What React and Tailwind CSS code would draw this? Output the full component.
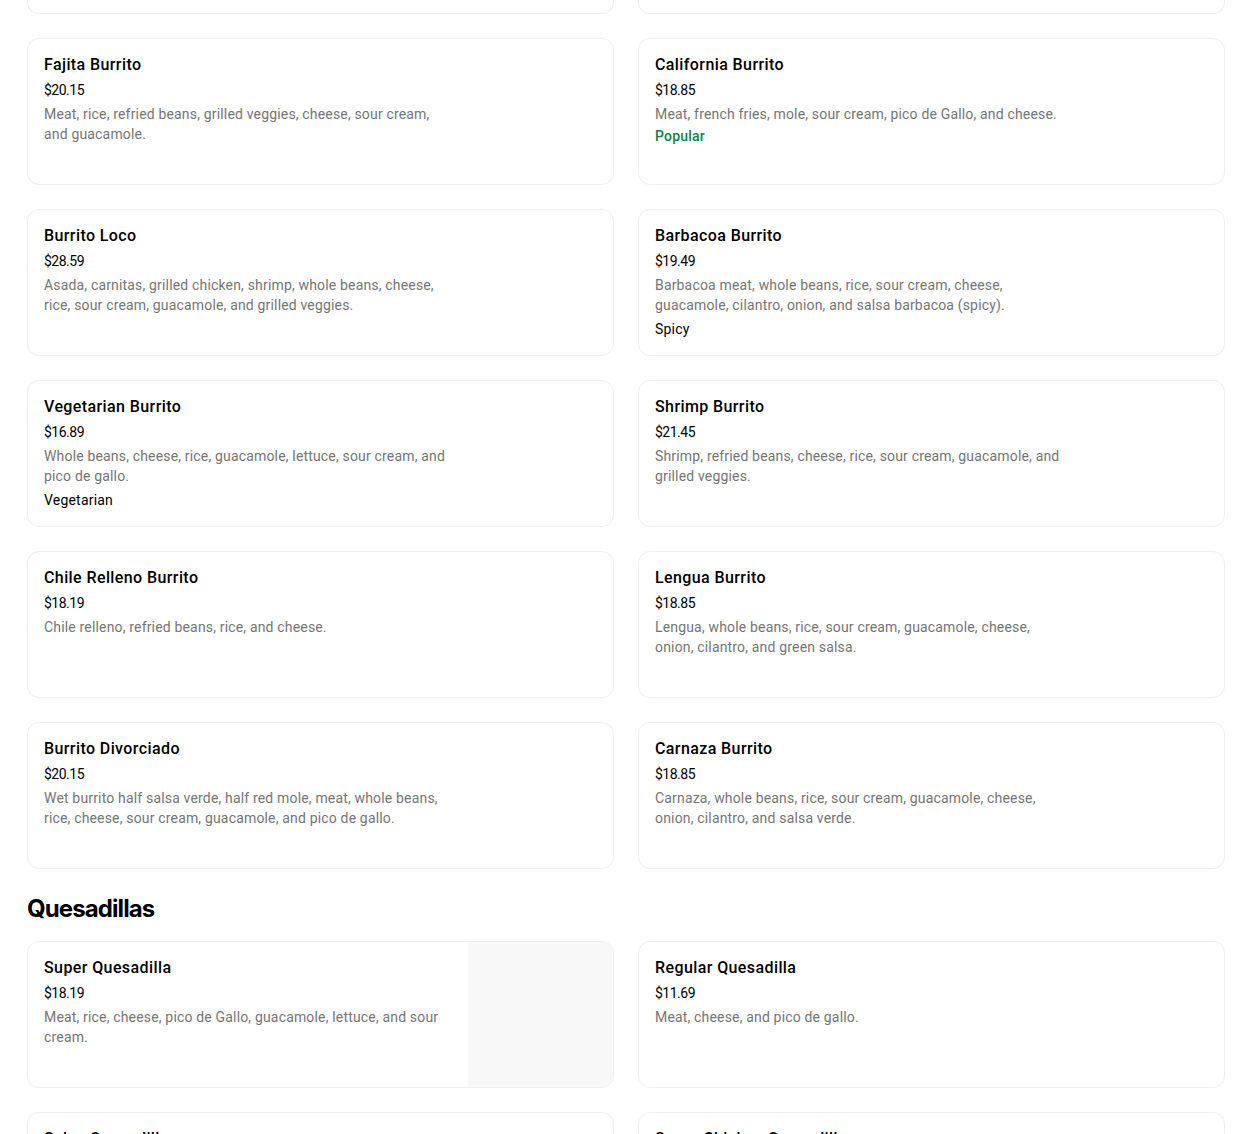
const rows = [
  [
    {
      name: 'Fajita Burrito',
      price: '$20.15',
      desc: 'Meat, rice, refried beans, grilled veggies, cheese, sour cream, and guacamole.',
    },
    {
      name: 'California Burrito',
      price: '$18.85',
      desc: 'Meat, french fries, mole, sour cream, pico de Gallo, and cheese.',
      tag: 'Popular',
    },
  ],
  [
    {
      name: 'Burrito Loco',
      price: '$28.59',
      desc: 'Asada, carnitas, grilled chicken, shrimp, whole beans, cheese, rice, sour cream, guacamole, and grilled veggies.',
    },
    {
      name: 'Barbacoa Burrito',
      price: '$19.49',
      desc: 'Barbacoa meat, whole beans, rice, sour cream, cheese, guacamole, cilantro, onion, and salsa barbacoa (spicy).',
      tag: 'Spicy',
    },
  ],
  [
    {
      name: 'Vegetarian Burrito',
      price: '$16.89',
      desc: 'Whole beans, cheese, rice, guacamole, lettuce, sour cream, and pico de gallo.',
      tag: 'Vegetarian',
    },
    {
      name: 'Shrimp Burrito',
      price: '$21.45',
      desc: 'Shrimp, refried beans, cheese, rice, sour cream, guacamole, and grilled veggies.',
    },
  ],
  [
    {
      name: 'Chile Relleno Burrito',
      price: '$18.19',
      desc: 'Chile relleno, refried beans, rice, and cheese.',
    },
    {
      name: 'Lengua Burrito',
      price: '$18.85',
      desc: 'Lengua, whole beans, rice, sour cream, guacamole, cheese, onion, cilantro, and green salsa.',
    },
  ],
  [
    {
      name: 'Burrito Divorciado',
      price: '$20.15',
      desc: 'Wet burrito half salsa verde, half red mole, meat, whole beans, rice, cheese, sour cream, guacamole, and pico de gallo.',
    },
    {
      name: 'Carnaza Burrito',
      price: '$18.85',
      desc: 'Carnaza, whole beans, rice, sour cream, guacamole, cheese, onion, cilantro, and salsa verde.',
    },
  ],
]

const quesadillas = [
  {
    name: 'Super Quesadilla',
    price: '$18.19',
    desc: 'Meat, rice, cheese, pico de Gallo, guacamole, lettuce, and sour cream.',
    image: true,
  },
  {
    name: 'Regular Quesadilla',
    price: '$11.69',
    desc: 'Meat, cheese, and pico de gallo.',
  },
  {
    name: 'Salsa Quesadilla',
    price: '$14.29',
    desc: 'Meat, cheese, and salsa.',
  },
  {
    name: 'Super Chicken Quesadilla',
    price: '$18.19',
    desc: 'Grilled chicken, rice, cheese, and guacamole.',
  },
]

function ItemCard({ item }) {
  return (
    <div className="flex h-[147px] overflow-hidden rounded-xl border border-[#f0f0f0] bg-white">
      <div className="flex-1 pl-4 pr-4 pt-4">
        <div className="text-[16px] font-medium leading-5 tracking-[0.4px] text-black">{item.name}</div>
        <div className="mt-[5px] text-[14px] leading-5 tracking-[-0.5px] text-black">{item.price}</div>
        <p className="mt-1 max-w-[408px] text-[14px] leading-5 tracking-[0.17px] text-[#757575]">{item.desc}</p>
        {item.tag && (
          <div
            className={
              item.tag === 'Popular'
                ? 'mt-[2px] text-[14px] font-medium leading-5 tracking-[0.2px] text-[#0e8345]'
                : 'mt-1 text-[14px] leading-5 tracking-[0.2px] text-black'
            }
          >
            {item.tag}
          </div>
        )}
      </div>
      {item.image && <div className="w-[145px] bg-[#f8f8f8]" />}
    </div>
  )
}

export default function App() {
  return (
    <div className="min-h-screen bg-white pl-[27px] pr-[25px] font-['Roboto',sans-serif]">
      {/* tail of the row above */}
      <div className="grid grid-cols-2 gap-6">
        <div className="h-[14px] rounded-b-xl border border-t-0 border-[#f0f0f0]" />
        <div className="h-[14px] rounded-b-xl border border-t-0 border-[#f0f0f0]" />
      </div>

      <div className="mt-6 grid grid-cols-2 gap-6">
        {rows.flat().map(item => (
          <ItemCard key={item.name} item={item} />
        ))}
      </div>

      <h2 className="mt-6 mb-4 font-['Inter',sans-serif] text-[24px] font-bold leading-8 tracking-[-0.9px] text-black">
        Quesadillas
      </h2>

      <div className="grid grid-cols-2 gap-6 pb-10">
        {quesadillas.map(item => (
          <ItemCard key={item.name} item={item} />
        ))}
      </div>
    </div>
  )
}
